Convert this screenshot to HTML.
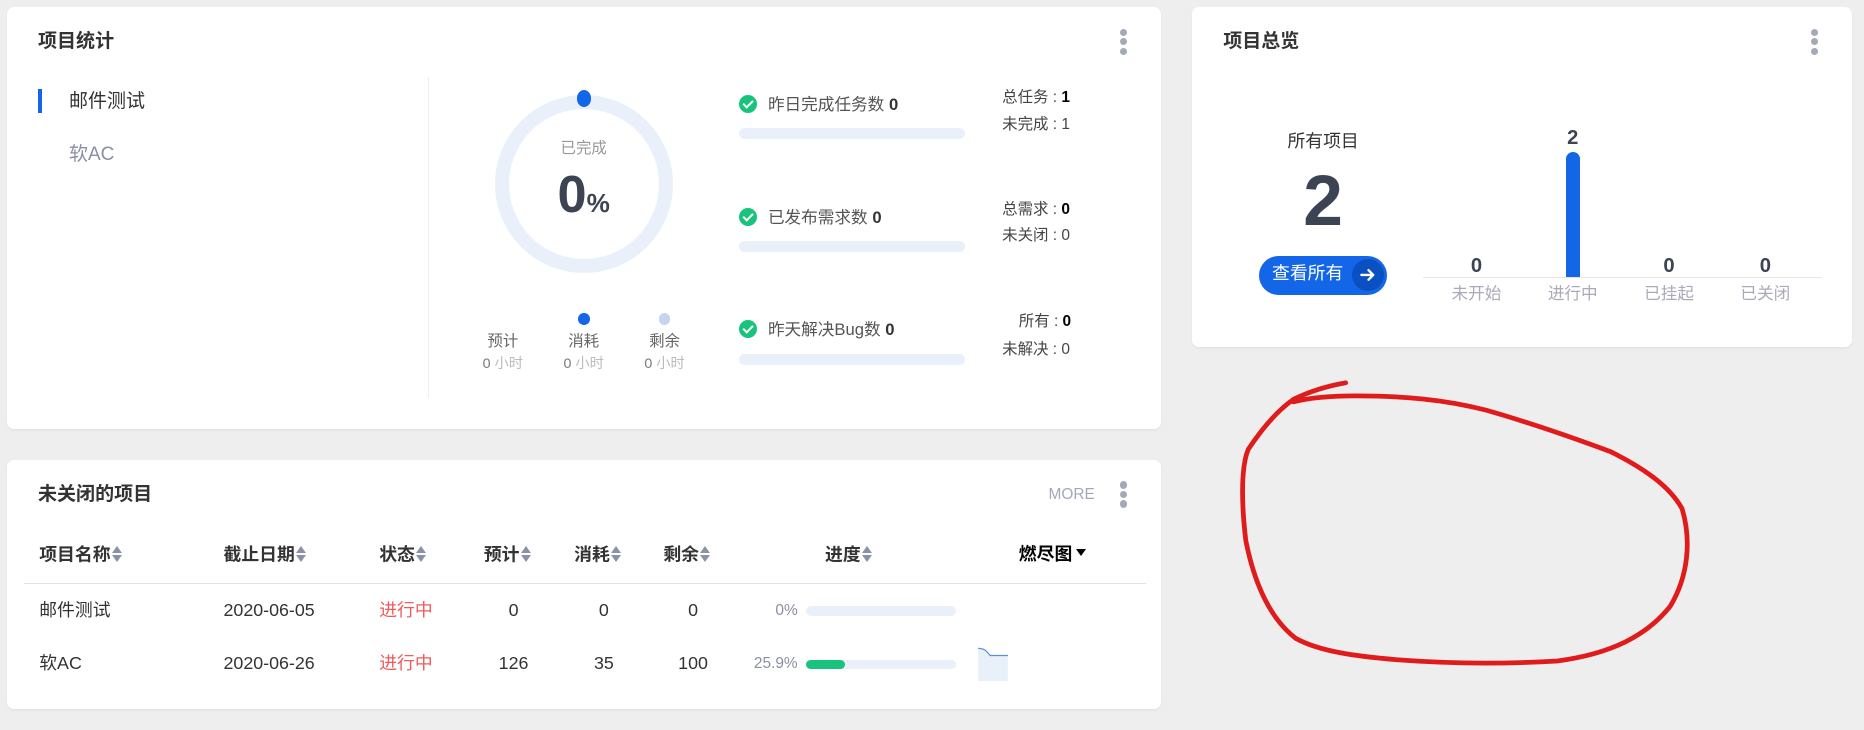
<!DOCTYPE html>
<html><head><meta charset="utf-8"><style>
*{margin:0;padding:0;box-sizing:border-box}
html,body{width:1864px;height:730px;overflow:hidden;background:#eeeeee}
#w{position:absolute;left:0;top:0;width:1568px;height:614px;zoom:1.18878;font-family:"Liberation Sans","Noto Sans CJK SC",sans-serif;color:#333}
.card{position:absolute;background:#fff;border-radius:6px;box-shadow:0 1px 2px rgba(0,0,0,.05)}
.a{position:absolute;white-space:nowrap;line-height:1}
.t{font-size:16px;font-weight:bold;color:#333}
.dots{position:absolute;width:6px}
.dots i{display:block;width:6px;height:6px;border-radius:3px;background:#a4a9ba;margin-bottom:2px}
.bar{position:absolute;height:9px;border-radius:5px;background:#e9f0f9}
.chk{position:absolute;width:15px;height:15px;border-radius:8px;background:#19c37d}
.chk:after{content:"";position:absolute;left:5px;top:2.5px;width:3.5px;height:7px;border:solid #fff;border-width:0 2px 2px 0;transform:rotate(45deg)}
.st{font-size:14px;color:#555}.st b{color:#333}
.rl{font-size:13px;color:#444}.rl b{color:#000}
.th{font-size:15px;font-weight:bold;color:#333}
.so{display:inline-block;width:10px;height:14px;vertical-align:-2px;margin-left:1px;position:relative}
.so:before,.so:after{content:"";position:absolute;left:0;border-left:5px solid transparent;border-right:5px solid transparent}
.so:before{top:0;border-bottom:6px solid #8a93a6}
.so:after{bottom:0;border-top:6px solid #8a93a6}
.td{font-size:15px;color:#333}
.red{color:#f05a5a}
</style></head><body><div id="w">

<div class="card" style="left:6px;top:6px;width:971px;height:355px"></div>
<div class="a t" style="left:32px;top:27px">项目统计</div>
<div class="dots" style="left:942px;top:24px"><i></i><i></i><i></i></div>
<div style="position:absolute;left:32px;top:75px;width:3px;height:20px;background:#1466e8"></div>
<div class="a" style="left:58px;top:77px;font-size:16px;color:#333">邮件测试</div>
<div class="a" style="left:58px;top:122px;font-size:16px;color:#8a8fa3">软AC</div>
<div style="position:absolute;left:360px;top:65px;width:1px;height:270px;background:#eceef2"></div>
<div style="position:absolute;left:416px;top:80px;width:150px;height:150px;border-radius:50%;border:12px solid #e9f0fa"></div>
<div style="position:absolute;left:485px;top:76px;width:12px;height:14px;border-radius:50%;background:#1466e8"></div>
<div class="a" style="left:491px;top:119px;transform:translateX(-50%);font-size:13px;color:#999">已完成</div>
<div class="a" style="left:491px;top:142px;transform:translateX(-50%);color:#3c4353;font-weight:bold"><span style="font-size:44px">0</span><span style="font-size:22px">%</span></div>
<div style="position:absolute;left:486px;top:263px;width:10px;height:10px;border-radius:50%;background:#1466e8"></div>
<div style="position:absolute;left:554px;top:263px;width:10px;height:10px;border-radius:50%;background:#c2d6f0"></div>
<div class="a" style="left:423px;top:281px;transform:translateX(-50%);font-size:13px;color:#666">预计</div>
<div class="a" style="left:491px;top:281px;transform:translateX(-50%);font-size:13px;color:#666">消耗</div>
<div class="a" style="left:559px;top:281px;transform:translateX(-50%);font-size:13px;color:#666">剩余</div>
<div class="a" style="left:423px;top:300px;transform:translateX(-50%);font-size:12px;color:#bbb"><span style="color:#777">0</span> 小时</div>
<div class="a" style="left:491px;top:300px;transform:translateX(-50%);font-size:12px;color:#bbb"><span style="color:#777">0</span> 小时</div>
<div class="a" style="left:559px;top:300px;transform:translateX(-50%);font-size:12px;color:#bbb"><span style="color:#777">0</span> 小时</div>

<div class="chk" style="left:622px;top:80px"></div>
<div class="a st" style="left:646px;top:82px">昨日完成任务数 <b>0</b></div>
<div class="bar" style="left:622px;top:108px;width:190px"></div>
<div class="chk" style="left:622px;top:175px"></div>
<div class="a st" style="left:646px;top:177px">已发布需求数 <b>0</b></div>
<div class="bar" style="left:622px;top:203px;width:190px"></div>
<div class="chk" style="left:622px;top:269px"></div>
<div class="a st" style="left:646px;top:271px">昨天解决Bug数 <b>0</b></div>
<div class="bar" style="left:622px;top:298px;width:190px"></div>
<div class="a rl" style="left:843px;top:76px">总任务 : <b>1</b></div>
<div class="a rl" style="left:843px;top:98px">未完成 : 1</div>
<div class="a rl" style="left:843px;top:170px">总需求 : <b>0</b></div>
<div class="a rl" style="left:843px;top:192px">未关闭 : 0</div>
<div class="a rl" style="left:857px;top:264px">所有 : <b>0</b></div>
<div class="a rl" style="left:843px;top:288px">未解决 : 0</div>

<div class="card" style="left:1003px;top:6px;width:555px;height:286px"></div>
<div class="a t" style="left:1029px;top:27px">项目总览</div>
<div class="dots" style="left:1523px;top:24px"><i></i><i></i><i></i></div>
<div class="a" style="left:1113px;top:112px;transform:translateX(-50%);font-size:15px;color:#333">所有项目</div>
<div class="a" style="left:1113px;top:140px;transform:translateX(-50%);font-size:60px;font-weight:bold;color:#3c4353">2</div>
<div style="position:absolute;left:1059px;top:215px;width:108px;height:33px;border-radius:17px;background:#1466e8"></div>
<div class="a" style="left:1070px;top:223px;font-size:15px;color:#fff">查看所有</div>
<div style="position:absolute;left:1137px;top:218px;width:27px;height:27px;border-radius:50%;background:#0b50c2"></div>
<svg style="position:absolute;left:1143px;top:224px" width="15" height="15" viewBox="0 0 15 15"><path d="M2 7.5H12M8 3.5L12 7.5L8 11.5" stroke="#fff" stroke-width="2" fill="none" stroke-linecap="round" stroke-linejoin="round"/></svg>
<div style="position:absolute;left:1197px;top:233px;width:335px;height:1px;background:#e5e5e5"></div>
<div style="position:absolute;left:1317px;top:128px;width:12px;height:105px;border-radius:6px 6px 0 0;background:#1466e8"></div>
<div class="a" style="left:1242px;top:215px;transform:translateX(-50%);font-size:17px;font-weight:bold;color:#3c4353">0</div>
<div class="a" style="left:1323px;top:108px;transform:translateX(-50%);font-size:17px;font-weight:bold;color:#3c4353">2</div>
<div class="a" style="left:1404px;top:215px;transform:translateX(-50%);font-size:17px;font-weight:bold;color:#3c4353">0</div>
<div class="a" style="left:1485px;top:215px;transform:translateX(-50%);font-size:17px;font-weight:bold;color:#3c4353">0</div>
<div class="a" style="left:1242px;top:241px;transform:translateX(-50%);font-size:14px;color:#aab">未开始</div>
<div class="a" style="left:1323px;top:241px;transform:translateX(-50%);font-size:14px;color:#aab">进行中</div>
<div class="a" style="left:1404px;top:241px;transform:translateX(-50%);font-size:14px;color:#aab">已挂起</div>
<div class="a" style="left:1485px;top:241px;transform:translateX(-50%);font-size:14px;color:#aab">已关闭</div>

<div class="card" style="left:6px;top:387px;width:971px;height:209px"></div>
<div class="a t" style="left:32px;top:408px">未关闭的项目</div>
<div class="a" style="left:882px;top:410px;font-size:13px;color:#a4a9ba">MORE</div>
<div class="dots" style="left:942px;top:405px"><i></i><i></i><i></i></div>
<div class="a th" style="left:33px;top:459px">项目名称<span class="so"></span></div>
<div class="a th" style="left:188px;top:459px">截止日期<span class="so"></span></div>
<div class="a th" style="left:319px;top:459px">状态<span class="so"></span></div>
<div class="a th" style="left:407px;top:459px">预计<span class="so"></span></div>
<div class="a th" style="left:483px;top:459px">消耗<span class="so"></span></div>
<div class="a th" style="left:558px;top:459px">剩余<span class="so"></span></div>
<div class="a th" style="left:694px;top:459px">进度<span class="so"></span></div>
<div class="a th" style="left:857px;top:459px;color:#000">燃尽图<span style="display:inline-block;margin-left:3px;vertical-align:3px;border-left:5px solid transparent;border-right:5px solid transparent;border-top:6px solid #000"></span></div>
<div style="position:absolute;left:20px;top:490px;width:944px;height:1px;background:#e3e3e3"></div>

<div class="a td" style="left:33px;top:506px">邮件测试</div>
<div class="a td" style="left:188px;top:506px">2020-06-05</div>
<div class="a td red" style="left:319px;top:506px">进行中</div>
<div class="a td" style="left:432px;top:506px;transform:translateX(-50%)">0</div>
<div class="a td" style="left:508px;top:506px;transform:translateX(-50%)">0</div>
<div class="a td" style="left:583px;top:506px;transform:translateX(-50%)">0</div>
<div class="a" style="right:897px;top:507px;font-size:13px;color:#8a8fa3">0%</div>
<div class="bar" style="left:678px;top:510px;width:126px;height:8px"></div>

<div class="a td" style="left:33px;top:551px">软AC</div>
<div class="a td" style="left:188px;top:551px">2020-06-26</div>
<div class="a td red" style="left:319px;top:551px">进行中</div>
<div class="a td" style="left:432px;top:551px;transform:translateX(-50%)">126</div>
<div class="a td" style="left:508px;top:551px;transform:translateX(-50%)">35</div>
<div class="a td" style="left:583px;top:551px;transform:translateX(-50%)">100</div>
<div class="a" style="right:897px;top:552px;font-size:13px;color:#8a8fa3">25.9%</div>
<div class="bar" style="left:678px;top:555px;width:126px;height:8px"></div>
<div class="bar" style="left:678px;top:555px;width:33px;height:8px;background:#19c37d"></div>
<svg style="position:absolute;left:822px;top:543px" width="28" height="30" viewBox="0 0 28 30"><path d="M1 2C6 2 8 4 11 8H26V30H1Z" fill="#e8f0fa"/><path d="M1 2C6 2 8 4 11 8H26" stroke="#5b8fe0" stroke-width="1" fill="none"/></svg>

<svg style="position:absolute;left:0;top:0" width="1568" height="614"><path d="M1132 322C1115 325 1100 330 1088 336C1075 345 1062 360 1050 378C1043 395 1045 430 1048 455C1055 490 1068 520 1090 537C1110 548 1140 552 1175 555C1215 558 1260 559 1310 556C1355 550 1385 535 1405 510C1420 485 1423 455 1415 428C1405 410 1385 395 1355 380C1320 367 1285 355 1250 345C1215 336 1180 333 1140 333C1115 333 1100 335 1088 338" fill="none" stroke="#e01b1b" stroke-width="4" stroke-linecap="round" stroke-linejoin="round"/></svg>
</div></body></html>
